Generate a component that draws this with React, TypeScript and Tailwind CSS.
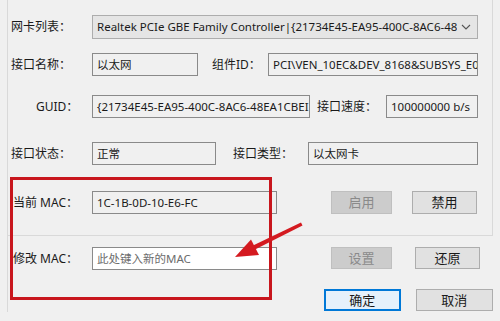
import React from "react";

const font = { fontFamily: '"Noto Sans", "Noto Sans CJK SC", sans-serif' };

function Field({ w, children, white, ml }: { w: string; children?: React.ReactNode; white?: boolean; ml?: string }) {
  return (
    <div
      className={`${w} ${ml ?? ""} h-full border border-[#8a8a8a] ${white ? "bg-white text-[#6d6d6d]" : "bg-[#f0f0f0] text-[#1a1a1a]"} pl-[4px] flex items-center overflow-hidden whitespace-nowrap text-[11.5px] leading-none`}
    >
      {children}
    </div>
  );
}

function Btn({ w, ml, children, disabled, primary }: { w: string; ml: string; children: React.ReactNode; disabled?: boolean; primary?: boolean }) {
  let cls = "bg-[#e1e1e1] border border-[#adadad] text-[#1a1a1a]";
  if (disabled) cls = "bg-[#cccccc] border border-[#bfbfbf] text-[#8a8a8a]";
  if (primary) cls = "bg-[#e5f1fb] border-2 border-[#0078d7] text-[#1a1a1a]";
  return (
    <div className={`${w} ${ml} h-full ${cls} flex items-center justify-center text-[13px] leading-none`}>{children}</div>
  );
}

export default function App() {
  return (
    <div className="relative w-[500px] h-[321px] bg-[#f0f0f0] overflow-hidden text-[#1a1a1a]" style={font}>
      {/* upper group */}
      <div className="ml-[7px] w-[486px] h-[236px] border-l border-r border-b border-[#d9d9d9] flex flex-col text-[12px]">
        <div className="mt-[15px] h-[24px] flex items-center">
          <div className="w-[84px] pl-[3px]">网卡列表：</div>
          <div className="w-[386px] h-full bg-[#e5e5e5] border border-[#adadad] flex items-center pl-[4px] pr-[6px]">
            <span className="flex-1 overflow-hidden whitespace-nowrap text-[11.5px]">Realtek PCIe GBE Family Controller|{"{"}21734E45-EA95-400C-8AC6-48EA1CBE</span>
            <svg width="10" height="6" viewBox="0 0 10 6" className="ml-[4px] shrink-0">
              <path d="M1 1 L5 5 L9 1" fill="none" stroke="#555" strokeWidth="1.1" />
            </svg>
          </div>
        </div>
        <div className="mt-[14px] h-[23px] flex items-center">
          <div className="w-[84px] pl-[3px]">接口名称：</div>
          <Field w="w-[106px]">以太网</Field>
          <div className="w-[56px] ml-[14px]">组件ID：</div>
          <Field w="w-[210px]">PCI\VEN_10EC&amp;DEV_8168&amp;SUBSYS_E000</Field>
        </div>
        <div className="mt-[19px] h-[23px] flex items-center">
          <div className="w-[84px] pl-[28px]">GUID：</div>
          <Field w="w-[218px]">{"{"}21734E45-EA95-400C-8AC6-48EA1CBEI</Field>
          <div className="w-[69px] ml-[7px]">接口速度：</div>
          <Field w="w-[92px]">100000000 b/s</Field>
        </div>
        <div className="mt-[24px] h-[23px] flex items-center">
          <div className="w-[84px] pl-[3px]">接口状态：</div>
          <Field w="w-[124px]">正常</Field>
          <div className="w-[75px] ml-[17px]">接口类型：</div>
          <Field w="w-[170px]">以太网卡</Field>
        </div>
        <div className="mt-[26px] h-[23px] flex items-center">
          <div className="w-[84px] pl-[5px]">当前 MAC：</div>
          <Field w="w-[185px]">1C-1B-0D-10-E6-FC</Field>
          <Btn w="w-[61px]" ml="ml-[54px]" disabled>启用</Btn>
          <Btn w="w-[65px]" ml="ml-[20px]">禁用</Btn>
        </div>
      </div>
      {/* lower area */}
      <div className="ml-[7px] w-[486px] h-[76px] border-l border-[#d9d9d9] flex flex-col text-[12px]">
        <div className="mt-[11px] h-[23px] flex items-center">
          <div className="w-[84px] pl-[5px]">修改 MAC：</div>
          <Field w="w-[185px]" white>此处键入新的MAC</Field>
          <div className="h-[22px] flex ml-[54px] self-start">
            <Btn w="w-[61px]" ml="ml-0" disabled>设置</Btn>
            <Btn w="w-[65px]" ml="ml-[23px]">还原</Btn>
          </div>
        </div>
        <div className="mt-[19px] h-[22px] flex items-center">
          <Btn w="w-[77px]" ml="ml-[316px]" primary>确定</Btn>
          <Btn w="w-[78px]" ml="ml-[15px]">取消</Btn>
        </div>
      </div>

      {/* red annotation rectangle */}
      <div className="absolute left-[10px] top-[177px] w-[262px] h-[123px] border-[3px] border-[#c8161d] pointer-events-none" />
      {/* red arrow */}
      <svg className="absolute left-0 top-0 pointer-events-none" width="500" height="321" viewBox="0 0 500 321">
        <path d="M301 222.5 L302.5 225.5 L255 249.5 L253 245.5 Z" fill="#d41a20" />
        <polygon points="235,257 251,239.5 259,255" fill="#d41a20" />
      </svg>
    </div>
  );
}
